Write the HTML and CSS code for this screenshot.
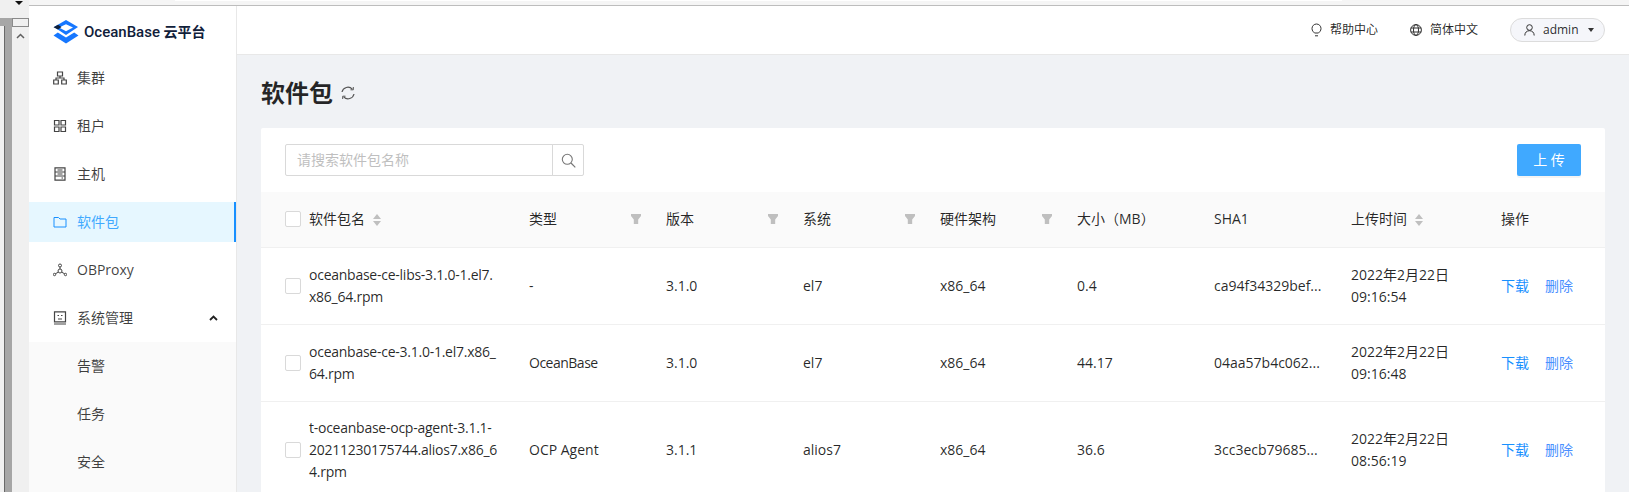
FILE: index.html
```html
<!DOCTYPE html>
<html lang="zh">
<head>
<meta charset="utf-8">
<title>OceanBase 云平台 - 软件包</title>
<link rel="stylesheet" href="styles.css">
</head>
<body>
<div class="frame">
  <div class="frame-left">
    <div class="frame-cap"><span class="drop-arrow"></span></div>
    <div class="frame-bar"></div>
    <div class="frame-pane"></div>
  </div>
  <div class="frame-scroll">
    <div class="frame-thumb"></div>
    <svg class="frame-up" width="9" height="6" viewBox="0 0 9 6"><path d="M1 5l3.500-3.500L8 5" fill="none" stroke="#606060" stroke-width="1.500"/></svg>
  </div>
</div>
<div class="page">
  <div class="topstrip"><span class="tab-edge"></span></div>
  <div class="app">
    <aside class="sidebar">
      <div class="logo">
        <svg width="26" height="24" viewBox="0 0 26 24"><path d="M13 0l12 7-12 8L1 7z" fill="#1677ff"/><path d="M13 4.200L20 7.500l-7 3.800L6 7.500z" fill="#fff"/><path d="M.5 7.300l4.500-2.500L8.500 7 5 9.600z" fill="#10203a"/><path d="M4.800 12.600l8.200 5 8.200-5 4.300 2.900L13 23.500.5 15.500z" fill="#1677ff"/></svg>
        <span class="logo-text"><b>OceanBase</b> 云平台</span>
      </div>
      <nav class="menu">
        <a class="item"><svg class="ic" viewBox="0 0 14 14"><path d="M4.500 1h5v4h-5zM.7 9h4.600v4H.7zM8.700 9h4.600v4H8.700zM7 5v2M3 9V7h8v2" fill="none" stroke="currentColor" stroke-width="1.200"/></svg>集群</a>
        <a class="item"><svg class="ic" viewBox="0 0 14 14"><path d="M1.500 1.500h4.500v4.500H1.500zM8 1.500h4.500v4.500H8zM1.500 8h4.500v4.500H1.500zM8 8h4.500v4.500H8z" fill="none" stroke="currentColor" stroke-width="1.200"/></svg>租户</a>
        <a class="item"><svg class="ic" viewBox="0 0 14 14"><path d="M2 .8h10v12.400H2zM2 5h10M2 9h10M4.500 3h5M4.500 7h5M8.500 11h1.500" fill="none" stroke="currentColor" stroke-width="1.200"/></svg>主机</a>
        <a class="item active"><svg class="ic" viewBox="0 0 14 14"><path d="M1 2.500h4.500l1.500 1.500h6v8H1z" fill="none" stroke="currentColor" stroke-linejoin="round"/></svg>软件包</a>
        <a class="item"><svg class="ic" viewBox="0 0 14 14"><circle cx="7" cy="2.500" r="1.500" fill="none" stroke="currentColor"/><circle cx="7" cy="8" r="2" fill="none" stroke="currentColor"/><circle cx="1.500" cy="11.500" r="1.200" fill="none" stroke="currentColor"/><circle cx="12.500" cy="11.500" r="1.200" fill="none" stroke="currentColor"/><path d="M7 4v2M5.300 9.200l-3 1.600M8.700 9.200l3 1.600" stroke="currentColor" fill="none"/></svg>OBProxy</a>
        <a class="item"><svg class="ic" viewBox="0 0 14 14"><path d="M1.500 .8h11v10h-11zM1 13h12M4.500 4.500h1.500M8 4.500h1.500M5 8h4" fill="none" stroke="currentColor" stroke-width="1.200"/></svg>系统管理<svg class="chev" width="9" height="6" viewBox="0 0 9 6"><path d="M1 5l3.500-3.500L8 5" fill="none" stroke="currentColor" stroke-width="1.800"/></svg></a>
      </nav>
      <div class="submenu">
        <a class="item sub">告警</a>
        <a class="item sub">任务</a>
        <a class="item sub">安全</a>
      </div>
    </aside>
    <main class="main">
      <header class="topbar">
        <span class="tb-link"><svg width="11" height="14" viewBox="0 0 11 14"><path d="M3.500 10C2.500 8.800 1 8 1 5.500a4.500 4.500 0 0 1 9 0C10 8 8.500 8.800 7.500 10zM4 12.800h3" fill="none" stroke="#333"/></svg>帮助中心</span>
        <span class="tb-link"><svg width="12" height="12" viewBox="0 0 12 12"><circle cx="6" cy="6" r="5.400" fill="none" stroke="#333"/><ellipse cx="6" cy="6" rx="2.500" ry="5.400" fill="none" stroke="#333"/><path d="M.8 4h10.400M.8 8h10.400" stroke="#333" fill="none"/></svg>简体中文</span>
        <span class="user"><svg width="11" height="12" viewBox="0 0 11 12"><circle cx="5.500" cy="3.500" r="2.800" fill="none" stroke="#333"/><path d="M.8 11.500c0-3 2-4.800 4.700-4.800s4.700 1.800 4.700 4.800" fill="none" stroke="#333"/></svg><span class="user-name">admin</span><i class="caret"></i></span>
      </header>
      <section class="content">
        <div class="title-row">
          <h1>软件包</h1>
          <svg width="14" height="14" viewBox="0 0 14 14"><path d="M1 6A6 6 0 0 1 11.300 3.200M13 8A6 6 0 0 1 2.700 10.800" fill="none" stroke="#555" stroke-width="1.200"/><path d="M9.500 3.800h2.800V1M4.500 10.200H1.700V13" fill="none" stroke="#555"/></svg>
        </div>
        <div class="card">
          <div class="toolbar">
            <div class="search">
              <span class="search-input">请搜索软件包名称</span>
              <span class="search-btn"><svg width="15" height="15" viewBox="0 0 15 15"><circle cx="6.300" cy="6.300" r="5" fill="none" stroke="#777" stroke-width="1.100"/><path d="M10 10l4.300 4.300" stroke="#777" stroke-width="1.200"/></svg></span>
            </div>
            <button class="upload">上 传</button>
          </div>
          <table class="grid">
            <colgroup>
              <col class="c-name"><col class="c-std"><col class="c-std"><col class="c-std"><col class="c-std"><col class="c-size"><col class="c-sha"><col class="c-time"><col>
            </colgroup>
            <thead>
              <tr>
                <th class="first"><span class="cb"></span>软件包名<svg class="sort" width="8" height="12" viewBox="0 0 8 12"><path d="M4 0l4 5H0zM4 12L0 7h8z" fill="#bfbfbf"/></svg></th>
                <th>类型<i class="filter"></i></th>
                <th>版本<i class="filter"></i></th>
                <th>系统<i class="filter"></i></th>
                <th>硬件架构<i class="filter"></i></th>
                <th>大小（MB）</th>
                <th>SHA1</th>
                <th>上传时间<svg class="sort" width="8" height="12" viewBox="0 0 8 12"><path d="M4 0l4 5H0zM4 12L0 7h8z" fill="#bfbfbf"/></svg></th>
                <th>操作</th>
              </tr>
            </thead>
            <tbody>
              <tr>
                <td class="first"><div class="name-cell"><span class="cb"></span><span class="name">oceanbase-ce-libs-3.1.0-1.el7.<br>x86_64.rpm</span></div></td>
                <td>-</td><td>3.1.0</td><td>el7</td><td>x86_64</td><td>0.4</td><td>ca94f34329bef...</td>
                <td>2022年2月22日<br>09:16:54</td>
                <td><a class="op">下载</a><a class="op">删除</a></td>
              </tr>
              <tr>
                <td class="first"><div class="name-cell"><span class="cb"></span><span class="name">oceanbase-ce-3.1.0-1.el7.x86_<br>64.rpm</span></div></td>
                <td class="tight">OceanBase</td><td>3.1.0</td><td>el7</td><td>x86_64</td><td>44.17</td><td>04aa57b4c062...</td>
                <td>2022年2月22日<br>09:16:48</td>
                <td><a class="op">下载</a><a class="op">删除</a></td>
              </tr>
              <tr class="tall">
                <td class="first"><div class="name-cell"><span class="cb"></span><span class="name">t-oceanbase-ocp-agent-3.1.1-<br>20211230175744.alios7.x86_6<br>4.rpm</span></div></td>
                <td>OCP Agent</td><td>3.1.1</td><td>alios7</td><td>x86_64</td><td>36.6</td><td>3cc3ecb79685...</td>
                <td>2022年2月22日<br>08:56:19</td>
                <td><a class="op">下载</a><a class="op">删除</a></td>
              </tr>
            </tbody>
          </table>
        </div>
      </section>
    </main>
  </div>
</div>
</body>
</html>
```
FILE: styles.css
```css
* { box-sizing: border-box; }
html, body { margin: 0; height: 100%; overflow: hidden; }
body {
  font: 14px/22px "Open Sans", "Noto Sans CJK SC", sans-serif;
  color: rgba(0, 0, 0, .85);
  background: #fff;
  display: flex;
}
.frame { width: 29px; flex: none; display: flex; background: #f0f0f0; }
.frame-left { width: 12px; display: flex; flex-direction: column; flex: none; }
.frame-cap { height: 18px; flex: none; }
.drop-arrow {
  display: block;
  width: 8px;
  margin: 1px 0 0 15px;
  border: 4px solid transparent;
  border-top: 4px solid #111;
  border-bottom: 0;
}
.frame-bar { height: 8px; flex: none; background: #a6a6a6; }
.frame-pane {
  flex: 1;
  margin-left: 4px;
  background: #a6a6a6;
  border-left: 1px solid #696969;
}
.frame-scroll { flex: 1; display: flex; flex-direction: column; align-items: center; padding-top: 18px; }
.frame-thumb { width: 17px; height: 9px; border: 1px solid #8a8a8a; background: #f0f0f0; }
.frame-up { margin-top: 6px; }

.page { flex: 1; min-width: 0; display: flex; flex-direction: column; }
.topstrip {
  height: 6px;
  flex: none;
  background: #f5f5f5;
  border-bottom: 1px solid #bdbdbd;
  padding-left: 146px;
}
.tab-edge { display: block; width: 1167px; height: 1px; background: #fff; }
.app { flex: 1; display: flex; min-height: 0; }

.sidebar {
  width: 208px;
  flex: none;
  background: #fff;
  border-right: 1px solid #e8e8e8;
  display: flex;
  flex-direction: column;
}
.logo { height: 52px; display: flex; align-items: center; gap: 5px; padding-left: 24px; }
.logo-text { font-weight: 700; font-size: 14px; color: #10203a; white-space: nowrap; font-family: Roboto, "Noto Sans CJK SC", sans-serif; }
.logo-text b { font-size: 15px; font-weight: 500; }
.menu { display: flex; flex-direction: column; gap: 8px; }
.item {
  height: 40px;
  display: flex;
  align-items: center;
  padding-left: 24px;
  color: rgba(0, 0, 0, .75);
}
.ic { width: 14px; height: 14px; margin-right: 10px; flex: none; color: #444; }
.active { background: #e6f7ff; color: #40a9ff; border-right: 2px solid #1890ff; }
.active .ic { color: #1890ff; }
.chev { margin-left: auto; margin-right: 18px; color: #222; }
.submenu { margin-top: 4px; padding-top: 4px; background: #fafafa; flex: 1; display: flex; flex-direction: column; gap: 8px; }
.sub { padding-left: 48px; }

.main { flex: 1; min-width: 0; background: #f0f2f5; display: flex; flex-direction: column; }
.topbar {
  height: 49px;
  flex: none;
  background: #fff;
  border-bottom: 1px solid #e8e8e8;
  display: flex;
  align-items: center;
  justify-content: flex-end;
  padding: 0 24px 1px 0;
  font-size: 12px;
}
.tb-link { display: flex; align-items: center; gap: 8px; margin-right: 32px; }
.user {
  width: 95px;
  height: 24px;
  border: 1px solid #dcdcdc;
  border-radius: 12px;
  background: #f5f6fa;
  display: flex;
  align-items: center;
  padding-left: 13px;
}
.user-name { margin-left: 8px; }
.caret {
  margin-left: 9px;
  border: 3px solid transparent;
  border-top: 4px solid #333;
  border-bottom: 0;
}
.content { padding: 0 24px; flex: 1; min-height: 0; overflow: hidden; }
.title-row { height: 73px; display: flex; align-items: center; gap: 8px; padding-top: 3px; }
h1 { margin: 0; font-size: 24px; line-height: 32px; font-weight: 700; color: rgba(0,0,0,.85); }
.card { background: #fff; border-radius: 2px; }
.toolbar { height: 64px; display: flex; align-items: center; justify-content: space-between; padding: 0 24px; }
.search { display: flex; width: 299px; height: 32px; }
.search-input {
  flex: 1;
  border: 1px solid #d9d9d9;
  border-radius: 2px 0 0 2px;
  padding: 4px 11px;
  color: #bfbfbf;
}
.search-btn {
  width: 32px;
  margin-left: -1px;
  border: 1px solid #d9d9d9;
  border-radius: 0 2px 2px 0;
  display: flex;
  align-items: center;
  justify-content: center;
}
.upload {
  width: 64px;
  height: 32px;
  border: 0;
  border-radius: 2px;
  background: #40a9ff;
  color: #fff;
  font: inherit;
  padding: 0;
  box-shadow: 0 2px 0 rgba(0, 0, 0, .045);
}
.grid { width: 100%; table-layout: fixed; border-collapse: collapse; }
.c-name { width: 252px; }
.c-std { width: 137px; }
.c-size { width: 137px; }
.c-sha { width: 137px; }
.c-time { width: 150px; }
th, td { padding: 0 16px; text-align: left; vertical-align: middle; border-bottom: 1px solid #f0f0f0; white-space: nowrap; }
th { height: 55px; background: #fafafa; font-weight: 400; position: relative; }
td { height: 77px; }
.tall td { height: 98px; }
.first { padding-left: 24px; padding-right: 0; }
.name-cell { display: flex; align-items: center; }
.name { letter-spacing: -.25px; }
.tight { letter-spacing: -.5px; }
.cb {
  display: inline-block;
  vertical-align: -3px;
  width: 16px;
  height: 16px;
  margin-right: 8px;
  border: 1px solid #d9d9d9;
  border-radius: 2px;
  background: #fff;
  flex: none;
}
.sort { margin-left: 8px; vertical-align: -2px; }
.filter {
  position: absolute;
  right: 9px;
  top: 22px;
  width: 10px;
  height: 10px;
  background: #bfbfbf;
  clip-path: polygon(0 0, 100% 0, 100% 20%, 72% 55%, 72% 100%, 28% 100%, 28% 55%, 0 20%);
}
.op { color: #1890ff; margin-right: 16px; }
.op + .op { color: #4a90ff; margin-right: 0; }
```
